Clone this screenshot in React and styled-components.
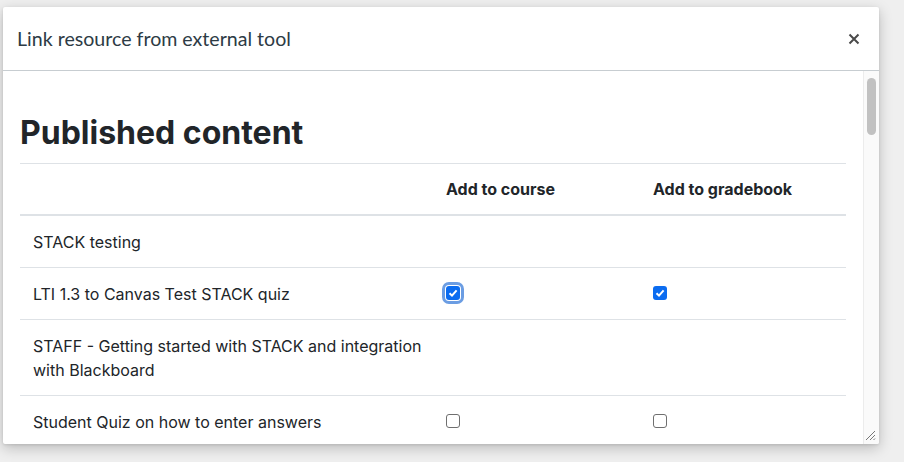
import styled, { createGlobalStyle } from "styled-components";

const GlobalStyle = createGlobalStyle`
  html, body {
    margin: 0;
    padding: 0;
    background: #eeeeee;
  }
  body {
    font-family: Inter, "Noto Sans", sans-serif;
    width: 904px;
    height: 462px;
    overflow: hidden;
  }
`;

const rows = [
  { title: "STACK testing", course: null, grade: null },
  { title: "LTI 1.3 to Canvas Test STACK quiz", course: true, grade: true, focused: true },
  {
    title: "STAFF - Getting started with STACK and integration with Blackboard",
    course: null,
    grade: null,
  },
  { title: "Student Quiz on how to enter answers", course: false, grade: false },
];

const Backdrop = styled.div`
  width: 904px;
  height: 462px;
  background: #efefef;
  padding: 7px 0 0 3px;
  box-sizing: border-box;
`;

const Modal = styled.div`
  width: 876px;
  height: 437px;
  background: #fff;
  border-radius: 2px;
  box-shadow: 0 4px 14px rgba(0, 0, 0, 0.22), 0 1px 3px rgba(0, 0, 0, 0.1);
  display: flex;
  flex-direction: column;
  overflow: hidden;
`;

const Header = styled.div`
  height: 63px;
  flex-shrink: 0;
  border-bottom: 1px solid #c7cdd1;
  display: flex;
  align-items: center;
  justify-content: space-between;
  padding: 0 15px 0 14px;
`;

const Title = styled.h2`
  margin: 0;
  font-family: Lato, "Liberation Sans", sans-serif;
  font-weight: 400;
  font-size: 19.6px;
  color: #2d3b45;
`;

const CloseButton = styled.button`
  border: none;
  background: none;
  padding: 4px;
  cursor: pointer;
  display: flex;
  color: #555;
`;

const BodyWrap = styled.div`
  position: relative;
  flex: 1;
  display: flex;
  min-height: 0;
`;

const Content = styled.div`
  flex: 1;
  min-width: 0;
  padding: 43px 0 0 17px;
  overflow: hidden;
  color: #212529;
`;

const Heading = styled.h1`
  margin: 0 0 11px;
  font-size: 32px;
  line-height: 1.2;
  font-weight: 700;
  color: #212529;
`;

const Table = styled.table`
  width: 826px;
  border-collapse: collapse;
  table-layout: fixed;
  font-size: 16px;
  line-height: 24px;
`;

const HeadCell = styled.th`
  box-sizing: border-box;
  text-align: left;
  font-weight: 700;
  padding: 13px 12px;
  border-top: 1px solid #dee2e6;
  border-bottom: 2px solid #dee2e6;
  width: ${(p) => p.$w}px;
`;

const Cell = styled.td`
  padding: 13.5px 12px 13.5px ${(p) => (p.$first ? 13 : 12)}px;
  border-bottom: 1px solid #dee2e6;
  vertical-align: middle;
`;

const Box = styled.span`
  display: inline-block;
  vertical-align: middle;
  width: 14px;
  height: 14px;
  box-sizing: border-box;
  border-radius: 3px;
  margin-top: -5px;
  border: ${(p) => (p.$checked ? "none" : "1px solid #6f6f6f")};
  background: ${(p) => (p.$checked ? "#0b6cf0" : "#fff")};
  box-shadow: ${(p) => (p.$focused ? "0 0 0 1px #fff, 0 0 0 4px #6b9de3" : "none")};
  position: relative;
  svg {
    position: absolute;
    left: 2px;
    top: 2px;
  }
`;

const Scrollbar = styled.div`
  width: 16px;
  flex-shrink: 0;
  background: #fafafa;
  border-left: 1px solid #ececec;
  box-sizing: border-box;
  padding: 7px 3px 0 3px;
`;

const Thumb = styled.div`
  width: 9px;
  height: 57px;
  border-radius: 5px;
  background: #c1c1c1;
`;

const Resize = styled.svg`
  position: absolute;
  right: 3px;
  bottom: 3px;
`;

const Checkbox = ({ checked, focused }) => (
  <Box $checked={checked} $focused={focused}>
    {checked && (
      <svg width="10" height="10" viewBox="0 0 10 10">
        <path d="M1.5 5.2 L4 7.6 L8.6 2.4" fill="none" stroke="#fff" strokeWidth="2" />
      </svg>
    )}
  </Box>
);

export default function App() {
  return (
    <>
      <GlobalStyle />
      <Backdrop>
        <Modal>
          <Header>
            <Title>Link resource from external tool</Title>
            <CloseButton aria-label="Close">
              <svg width="12" height="12" viewBox="0 0 12 12">
                <path d="M1.5 1.5 L10.5 10.5 M10.5 1.5 L1.5 10.5" stroke="#4a4a4a" strokeWidth="2" />
              </svg>
            </CloseButton>
          </Header>
          <BodyWrap>
            <Content>
              <Heading>Published content</Heading>
              <Table>
                <thead>
                  <tr>
                    <HeadCell $w={414}></HeadCell>
                    <HeadCell $w={207}>Add to course</HeadCell>
                    <HeadCell $w={205}>Add to gradebook</HeadCell>
                  </tr>
                </thead>
                <tbody>
                  {rows.map((r) => (
                    <tr key={r.title}>
                      <Cell $first>{r.title}</Cell>
                      <Cell>{r.course !== null && <Checkbox checked={r.course} focused={r.focused} />}</Cell>
                      <Cell>{r.grade !== null && <Checkbox checked={r.grade} />}</Cell>
                    </tr>
                  ))}
                </tbody>
              </Table>
            </Content>
            <Scrollbar>
              <Thumb />
            </Scrollbar>
            <Resize width="11" height="11" viewBox="0 0 11 11">
              <path d="M10 1 L1 10 M10 5 L5 10 M10 8.5 L8.5 10" stroke="#777" strokeWidth="1" />
            </Resize>
          </BodyWrap>
        </Modal>
      </Backdrop>
    </>
  );
}
